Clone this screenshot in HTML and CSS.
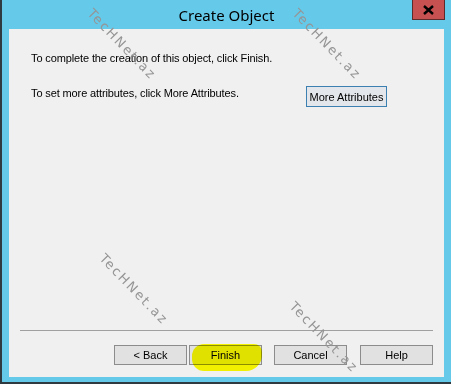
FILE: index.html
```html
<!DOCTYPE html>
<html lang="en">
<head>
  <meta charset="UTF-8" />
  <title>Create Object</title>
  <link rel="stylesheet" href="styles.css">
</head>
<body>

  <div class="window">
    <!-- TITLE BAR -->
    <div class="titlebar">
      <span></span>
      <h1 class="title">Create Object</h1>
      <button class="close" title="Close">
        <svg width="11" height="10" viewBox="0 0 11 10">
          <path d="M1 1 L10 9 M10 1 L1 9" stroke="#000" stroke-width="2.4" fill="none"/>
        </svg>
      </button>
    </div>

    <!-- DIALOG BODY -->
    <div class="panel">
      <p class="line">To complete the creation of this object, click Finish.</p>

      <div class="attr-row">
        <p class="line">To set more attributes, click More Attributes.</p>
        <button class="btn btn-focus">More Attributes</button>
      </div>

      <div class="footer">
        <hr class="sep">
        <div class="buttons">
          <button class="btn">&lt; Back</button>
          <button class="btn btn-finish"><span class="mark"></span>Finish</button>
          <button class="btn btn-cancel">Cancel</button>
          <button class="btn">Help</button>
        </div>
      </div>
    </div>

    <!-- watermark -->
    <span class="wm" style="left:120px;top:44px">TecHNet.az</span>
    <span class="wm" style="left:325px;top:44px">TecHNet.az</span>
    <span class="wm" style="left:132px;top:289px">TecHNet.az</span>
    <span class="wm" style="left:322px;top:337px">TecHNet.az</span>
  </div>

</body>
</html>
```

FILE: styles.css
```css
body {
  margin: 0;
  padding: 0;
  background: #65c9ea;
  font-family: "Liberation Sans", Arial, sans-serif;
  font-size: 11px;
  color: #000;
}
.window {
  position: relative;
  width: 449px;
  height: 377px;
  background: #65c9ea;
  border-left: 2px solid #2f3a40;
  border-bottom: 2px solid #2f3a40;
  padding-bottom: 5px;
  display: flex;
  flex-direction: column;
  overflow: hidden;
}
.titlebar {
  height: 29px;
  display: grid;
  grid-template-columns: 1fr auto 1fr;
  align-items: start;
}
.title {
  margin: 5px 0 0;
  font-family: "Noto Sans", "Open Sans", sans-serif;
  font-weight: normal;
  font-size: 15px;
  line-height: 20px;
  color: #000;
}
.close {
  justify-self: end;
  margin-right: 6px;
  width: 33px;
  height: 20px;
  padding: 0;
  background: #c75050;
  border: 1px solid #5e2a2a;
  border-top: none;
  display: flex;
  align-items: center;
  justify-content: center;
}
.panel {
  flex: 1;
  margin: 0 7px;
  background: #f0f0f0;
  display: flex;
  flex-direction: column;
}
.line {
  margin: 0;
  line-height: 13px;
  letter-spacing: -0.12px;
}
.panel > .line {
  padding: 23px 0 0 22px;
}
.attr-row {
  display: grid;
  grid-template-columns: 275px auto;
  align-items: center;
  padding: 21px 0 0 22px;
}
.attr-row .line {
  margin-top: -7px;
}
.btn {
  font-family: "Liberation Sans", Arial, sans-serif;
  font-size: 11px;
  color: #000;
  background: #e1e1e1;
  border: 1px solid #8c8c8c;
  height: 20px;
  width: 73px;
  padding: 0;
}
.btn-focus {
  width: 81px;
  height: 21px;
  border-color: #3c7fb1;
  background: #e3e6ea;
}
.footer {
  margin-top: auto;
  padding: 0 11px 12px;
}
.sep {
  margin: 0;
  border: none;
  border-top: 1px solid #a0a0a0;
}
.buttons {
  display: flex;
  justify-content: flex-end;
  margin-top: 14px;
}
.btn-finish {
  position: relative;
  margin-left: 2px;
}
.btn-cancel {
  margin-left: 12px;
  margin-right: 13px;
}
.mark {
  position: absolute;
  left: 2px;
  top: -2px;
  width: 70px;
  height: 27px;
  background: #ffff00;
  border-radius: 12px 8px 16px 12px;
  mix-blend-mode: multiply;
}
.wm {
  position: absolute;
  transform: translate(-50%, -50%) rotate(46deg);
  font-family: "DejaVu Sans", sans-serif;
  font-size: 13px;
  letter-spacing: 2px;
  color: #959595;
  white-space: nowrap;
  pointer-events: none;
}
```
